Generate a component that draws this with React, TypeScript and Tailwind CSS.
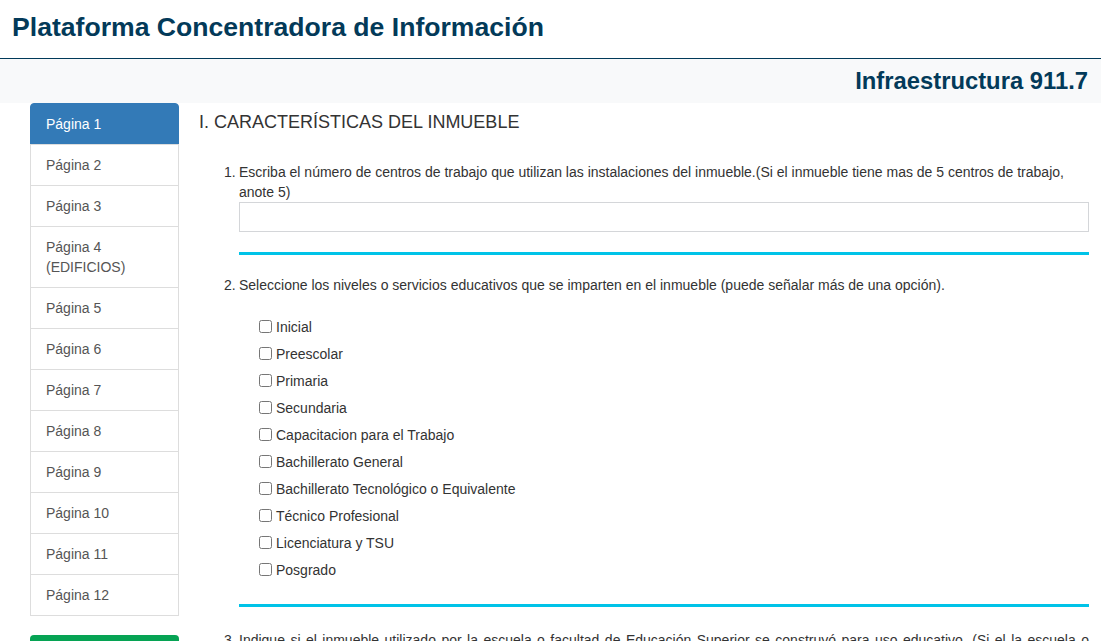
import React from "react";

const pages = [
  "Página 1",
  "Página 2",
  "Página 3",
  "Página 4 (EDIFICIOS)",
  "Página 5",
  "Página 6",
  "Página 7",
  "Página 8",
  "Página 9",
  "Página 10",
  "Página 11",
  "Página 12",
];

const niveles = [
  "Inicial",
  "Preescolar",
  "Primaria",
  "Secundaria",
  "Capacitacion para el Trabajo",
  "Bachillerato General",
  "Bachillerato Tecnológico o Equivalente",
  "Técnico Profesional",
  "Licenciatura y TSU",
  "Posgrado",
];

export default function App() {
  return (
    <div
      className="w-[1101px] bg-white text-[#333] text-[14px]"
      style={{ fontFamily: '"Liberation Sans", Arial, sans-serif' }}
    >
      <header className="h-[59px] border-b border-[#003a5a] pl-[12px] pt-[10px]">
        <h1 className="text-[26.6px] leading-[34px] font-bold text-[#033a59]">
          Plataforma Concentradora de Información
        </h1>
      </header>
      <div className="h-[44px] bg-[#f8f9fa] flex items-center justify-end pr-[13px]">
        <h2 className="text-[23.8px] leading-[28px] font-bold text-[#033a59] mt-[-1px]">
          Infraestructura 911.7
        </h2>
      </div>
      <div className="flex pr-[12px]">
        <nav className="ml-[30px] w-[149px] shrink-0 flex flex-col">
          <div className="flex flex-col">
            {pages.map((p, i) => (
              <a
                key={p}
                className={
                  i === 0
                    ? "block px-[15px] py-[10px] leading-[20px] border border-[#337ab7] bg-[#337ab7] text-white rounded-t-[4px] -mb-px"
                    : i === pages.length - 1
                    ? "block px-[15px] py-[10px] leading-[20px] border border-[#ddd] text-[#555] bg-white"
                    : "block px-[15px] py-[10px] leading-[20px] border border-[#ddd] text-[#555] bg-white -mb-px"
                }
              >
                {p}
              </a>
            ))}
          </div>
          <button className="mt-[19px] h-[40px] w-full rounded-[4px] bg-[#06a354] text-white">
            Guardar
          </button>
        </nav>
        <main className="ml-[20px] flex-1 min-w-0">
          <h3 className="pt-[8px] text-[18px] leading-[22px] text-[#333]">
            I. CARACTERÍSTICAS DEL INMUEBLE
          </h3>
          <ol className="mt-[29px] pl-[40px]">
            <li className="relative leading-[20px]">
              <span className="absolute left-[-15px] top-0">1.</span>
              <p>
                Escriba el número de centros de trabajo que utilizan las instalaciones del inmueble.(Si el inmueble tiene mas de 5 centros de trabajo, anote 5)
              </p>
              <input
                type="text"
                className="block w-full h-[30px] border border-[#d4d6d9] bg-white outline-none"
              />
              <div className="mt-[20px] h-[3px] bg-[#00c3e8]" />
            </li>
            <li className="relative leading-[20px] mt-[20px]">
              <span className="absolute left-[-15px] top-0">2.</span>
              <p>
                Seleccione los niveles o servicios educativos que se imparten en el inmueble (puede señalar más de una opción).
              </p>
              <div className="mt-[18px] pl-[20px] flex flex-col">
                {niveles.map((n) => (
                  <label key={n} className="h-[27px] flex items-center">
                    <input
                      type="checkbox"
                      className="w-[13px] h-[13px] m-0 mr-[4px]"
                    />
                    <span>{n}</span>
                  </label>
                ))}
              </div>
              <div className="mt-[21px] h-[3px] bg-[#00c3e8]" />
            </li>
            <li className="relative leading-[20px] mt-[23px]">
              <span className="absolute left-[-15px] top-0">3.</span>
              <p className="text-justify">
                Indique si el inmueble utilizado por la escuela o facultad de Educación Superior se construyó para uso educativo. (Si el la escuela o facultad comparte el inmueble con otra escuela, responda de acuerdo a la construcción original del inmueble).
              </p>
            </li>
          </ol>
        </main>
      </div>
    </div>
  );
}
